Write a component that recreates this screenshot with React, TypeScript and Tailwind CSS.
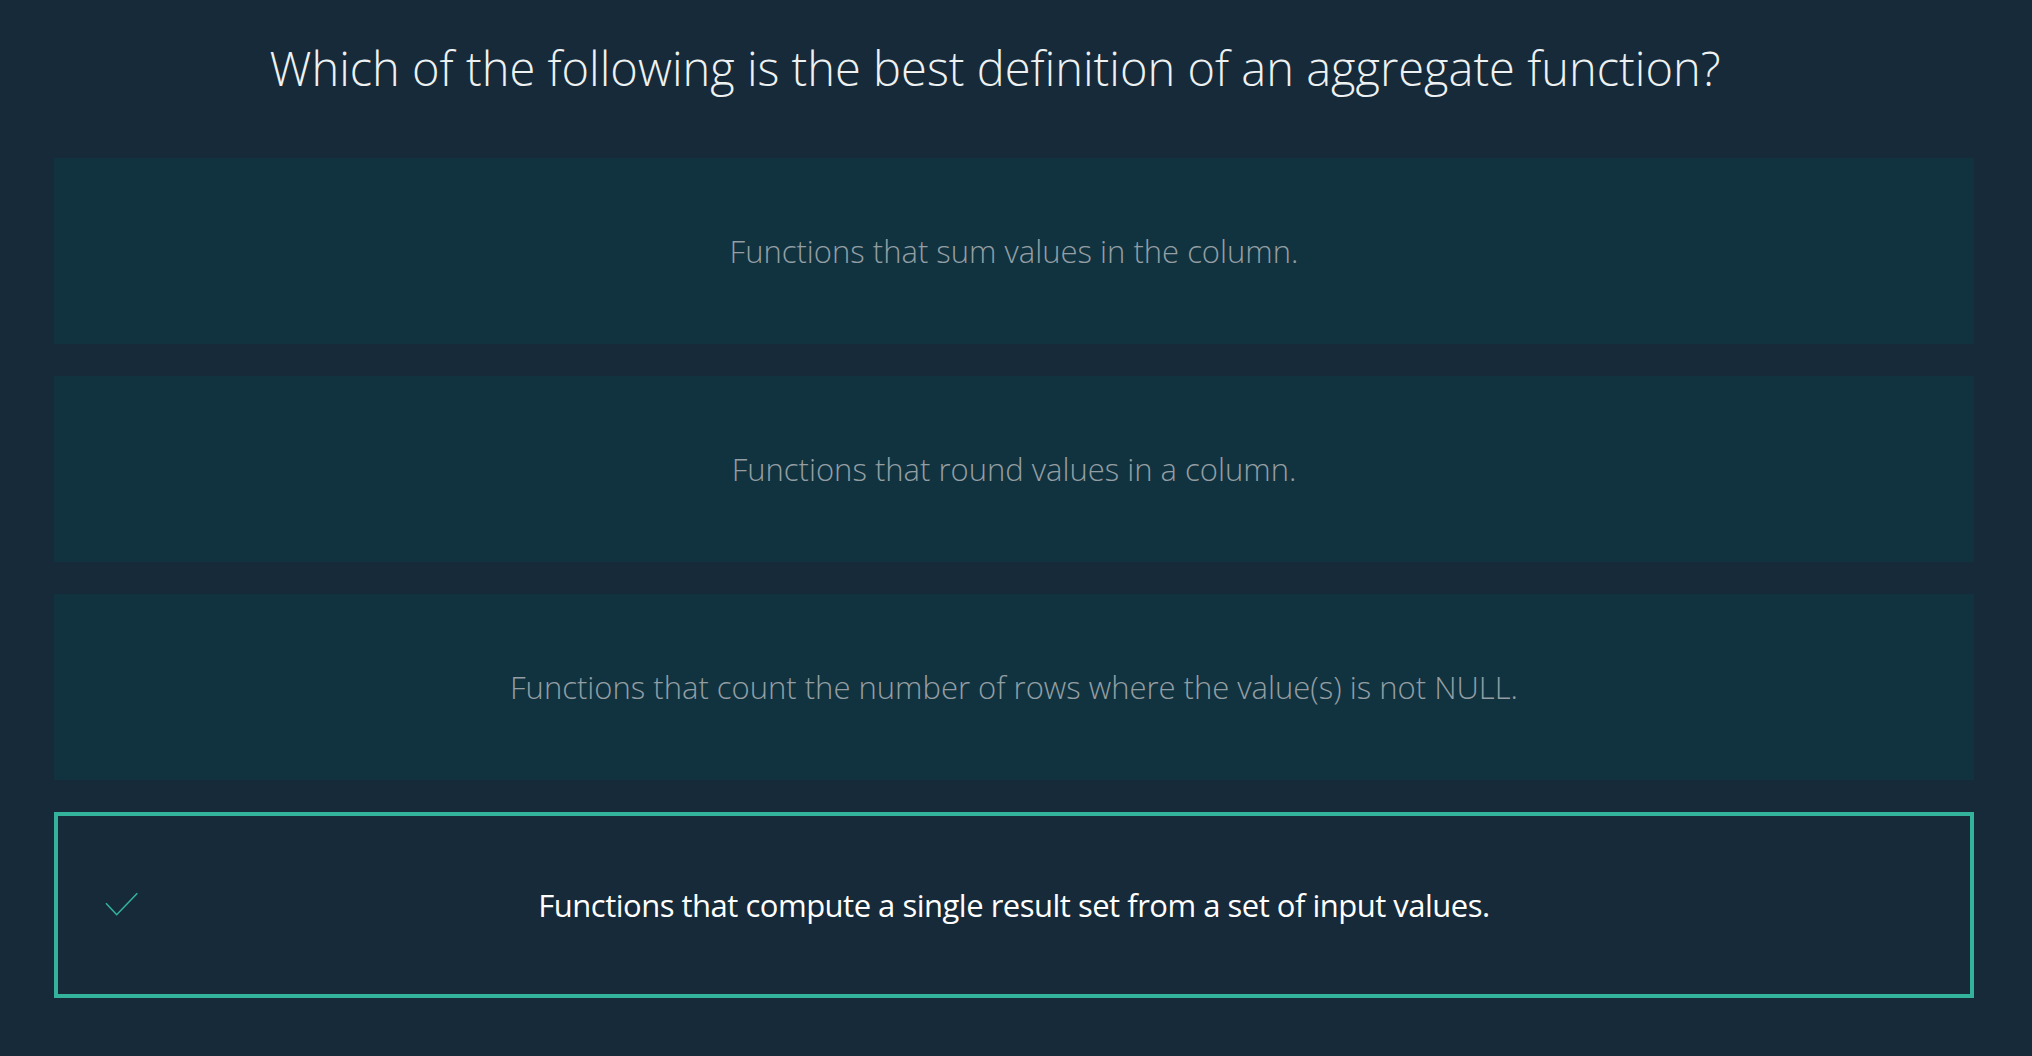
const OPTIONS = [
  { text: 'Functions that sum values in the column.', correct: false },
  { text: 'Functions that round values in a column.', correct: false },
  { text: 'Functions that count the number of rows where the value(s) is not NULL.', correct: false },
  { text: 'Functions that compute a single result set from a set of input values.', correct: true },
];

function Tick() {
  return (
    <svg
      className="absolute left-[47px] top-[76px] w-[34px] h-[26px]"
      viewBox="0 0 34 26"
      fill="none"
      stroke="#33b39b"
      strokeWidth="1.6"
    >
      <polyline points="1,11.3 11.7,22.7 32.3,1.3" />
    </svg>
  );
}

export default function App() {
  return (
    <div
      className="min-h-screen w-full bg-[#162a39] pl-[54px] pr-[58px] pb-[58px]"
      style={{ fontFamily: '"Open Sans", "Noto Sans", sans-serif' }}
    >
      {/* question */}
      <h1 className="h-[158px] flex items-center justify-center pb-[22px] pr-[38px] text-[47px] font-light tracking-[0px] text-[#eef1f2]">
        Which of the following is the best definition of an aggregate function?
      </h1>

      {/* answers */}
      <div className="flex flex-col gap-[32px]">
        {OPTIONS.map((opt, i) =>
          opt.correct ? (
            <div
              key={i}
              className="relative h-[186px] flex items-center justify-center border-4 border-[#33b39b] bg-[#162a39]"
            >
              <Tick />
              <span className="text-[31px] tracking-[-0.5px] text-white">{opt.text}</span>
            </div>
          ) : (
            <div key={i} className="h-[186px] flex items-center justify-center bg-[#113340]">
              <span className="text-[31px] font-light tracking-[0px] text-[#949ea3]">{opt.text}</span>
            </div>
          )
        )}
      </div>
    </div>
  );
}
